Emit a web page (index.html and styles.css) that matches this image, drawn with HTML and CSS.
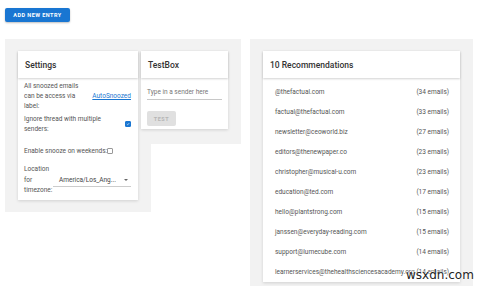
FILE: index.html
```html
<!DOCTYPE html>
<html>
<head>
<meta charset="utf-8">
<link rel="stylesheet" href="styles.css">
</head>
<body>
<div class="page">
  <button class="add-btn">ADD NEW ENTRY</button>
  <div class="panels">
    <div class="panel panel-settings">
      <div class="card">
        <div class="card-head">Settings</div>
        <div class="settings-body">
          <div class="row row-label">
            <div class="label label-wide">All snoozed emails can be access via label:</div>
            <a class="link" href="#">AutoSnoozed</a>
          </div>
          <div class="row row-ignore">
            <div class="label label-ignore">Ignore thread with multiple senders:</div>
            <span class="check checked"><svg viewBox="0 0 10 10" width="6" height="6"><path d="M2 5.2 L4.1 7.2 L8 2.8" fill="none" stroke="#fff" stroke-width="1.6"/></svg></span>
          </div>
          <div class="row row-weekend">
            <div class="label">Enable snooze on weekends:</div>
            <span class="check"></span>
          </div>
          <div class="row row-location">
            <div class="label label-loc">Location for timezone:</div>
            <div class="select"><span>America/Los_Ang...</span><span class="arrow"></span></div>
          </div>
        </div>
      </div>
    </div>
    <div class="panel panel-test">
      <div class="card">
        <div class="card-head">TestBox</div>
        <div class="test-body">
          <div class="input">Type in a sender here</div>
          <button class="test-btn" disabled>TEST</button>
        </div>
      </div>
    </div>
    <div class="panel panel-rec">
      <div class="card">
        <div class="card-head">10 Recommendations</div>
        <div class="rec-body">
          <div class="rec"><span class="mail">@thefactual.com</span><span class="cnt">(34 emails)</span></div>
          <div class="rec"><span class="mail">factual@thefactual.com</span><span class="cnt">(33 emails)</span></div>
          <div class="rec"><span class="mail">newsletter@ceoworld.biz</span><span class="cnt">(27 emails)</span></div>
          <div class="rec"><span class="mail">editors@thenewpaper.co</span><span class="cnt">(23 emails)</span></div>
          <div class="rec"><span class="mail">christopher@musical-u.com</span><span class="cnt">(23 emails)</span></div>
          <div class="rec"><span class="mail">education@ted.com</span><span class="cnt">(17 emails)</span></div>
          <div class="rec"><span class="mail">hello@plantstrong.com</span><span class="cnt">(15 emails)</span></div>
          <div class="rec"><span class="mail">janssen@everyday-reading.com</span><span class="cnt">(15 emails)</span></div>
          <div class="rec"><span class="mail">support@lumecube.com</span><span class="cnt">(14 emails)</span></div>
          <div class="rec"><span class="mail">learnerservices@thehealthsciencesacademy.org</span><span class="cnt">(14 emails)</span></div>
        </div>
      </div>
    </div>
  </div>
  <div class="watermark">wsxdn.com</div>
</div>
</body>
</html>
```

FILE: styles.css
```css
* { box-sizing: border-box; }
html, body { margin: 0; padding: 0; background: #fff; }
body {
  font-family: Roboto, "Liberation Sans", sans-serif;
  color: #444;
  width: 480px;
  height: 286px;
  overflow: hidden;
}
.page {
  padding: 8px 0 0 5px;
}
.add-btn {
  display: block;
  width: 65px;
  height: 14px;
  padding: 0;
  border: none;
  border-radius: 2px;
  background: #1976d2;
  color: #fff;
  font-family: Roboto, "Liberation Sans", sans-serif;
  font-size: 5.5px;
  font-weight: 700;
  letter-spacing: 0.45px;
  box-shadow: 0 1px 2px rgba(0,0,0,0.25);
}
.panels {
  display: flex;
  align-items: flex-start;
  margin-top: 17px;
}
.panel {
  background: #f2f2f2;
  padding: 12px 13px 12px 13px;
}
.panel-settings { width: 146px; }
.panel-test { width: 113px; margin-left: -23px; padding-bottom: 15px; }
.panel-rec { width: 223px; margin-left: 9px; height: 260px; }
.card {
  position: relative;
  z-index: 1;
  background: #fff;
  box-shadow: 0 1px 3px rgba(0,0,0,0.14);
}
.card-head {
  height: 27px;
  display: flex;
  align-items: center;
  padding-left: 7px;
  font-size: 8.5px;
  font-weight: 500;
  color: #333;
  box-shadow: 0 1px 2px rgba(0,0,0,0.18);
}
.settings-body {
  padding: 3px 7px 4px 6px;
  font-size: 6.5px;
  line-height: 10px;
  color: #555;
}
.row {
  display: flex;
  align-items: center;
}
.label-wide { width: 60px; }
.link {
  color: #1976d2;
  text-decoration: underline;
  margin-left: auto;
}
.row-ignore { margin-top: 3px; }
.label-ignore { width: 96px; }
.check {
  width: 6px;
  height: 6px;
  border: 1px solid #999;
  border-radius: 1px;
  display: inline-flex;
  align-items: center;
  justify-content: center;
  margin-left: auto;
  background: #fff;
}
.check.checked {
  background: #1976d2;
  border-color: #1976d2;
}
.row-weekend { margin-top: 12px; }
.row-weekend .check { margin-left: 0; }
.row-location { margin-top: 8px; line-height: 10.5px; }
.label-loc { width: 28px; }
.select {
  flex: 1;
  margin-left: 1px;
  display: flex;
  align-items: center;
  justify-content: space-between;
  height: 14px;
  padding: 0 3px 0 6px;
  border-bottom: 1px solid #ccc;
  margin-top: 1px;
  color: #444;
}
.arrow {
  width: 0;
  height: 0;
  border-left: 2px solid transparent;
  border-right: 2px solid transparent;
  border-top: 2px solid #666;
}
.test-body {
  padding: 10px 6px 3px 6px;
}
.input {
  font-size: 6.5px;
  color: #777;
  padding-bottom: 3px;
  border-bottom: 1px solid #c8c8c8;
}
.test-btn {
  display: block;
  margin-top: 11px;
  width: 29px;
  height: 15px;
  padding: 0;
  border: none;
  border-radius: 2px;
  background: #e0e0e0;
  color: #b5b5b5;
  font-family: Roboto, "Liberation Sans", sans-serif;
  font-size: 5.5px;
  font-weight: 700;
  letter-spacing: 0.5px;
}
.rec-body {
  padding: 4px 11px 0 12px;
  font-size: 6.5px;
  color: #555;
}
.rec {
  display: flex;
  align-items: center;
  height: 20px;
}
.mail {
  flex: 1;
  min-width: 0;
  white-space: nowrap;
}
.cnt {
  flex: none;
  white-space: nowrap;
}
.watermark {
  position: absolute;
  left: 406px;
  top: 268px;
  font-family: "DejaVu Sans", sans-serif;
  font-size: 12px;
  color: #222;
  z-index: 5;
  text-shadow: 0 0 2px #fff, 0 0 2px #fff;
}
```
